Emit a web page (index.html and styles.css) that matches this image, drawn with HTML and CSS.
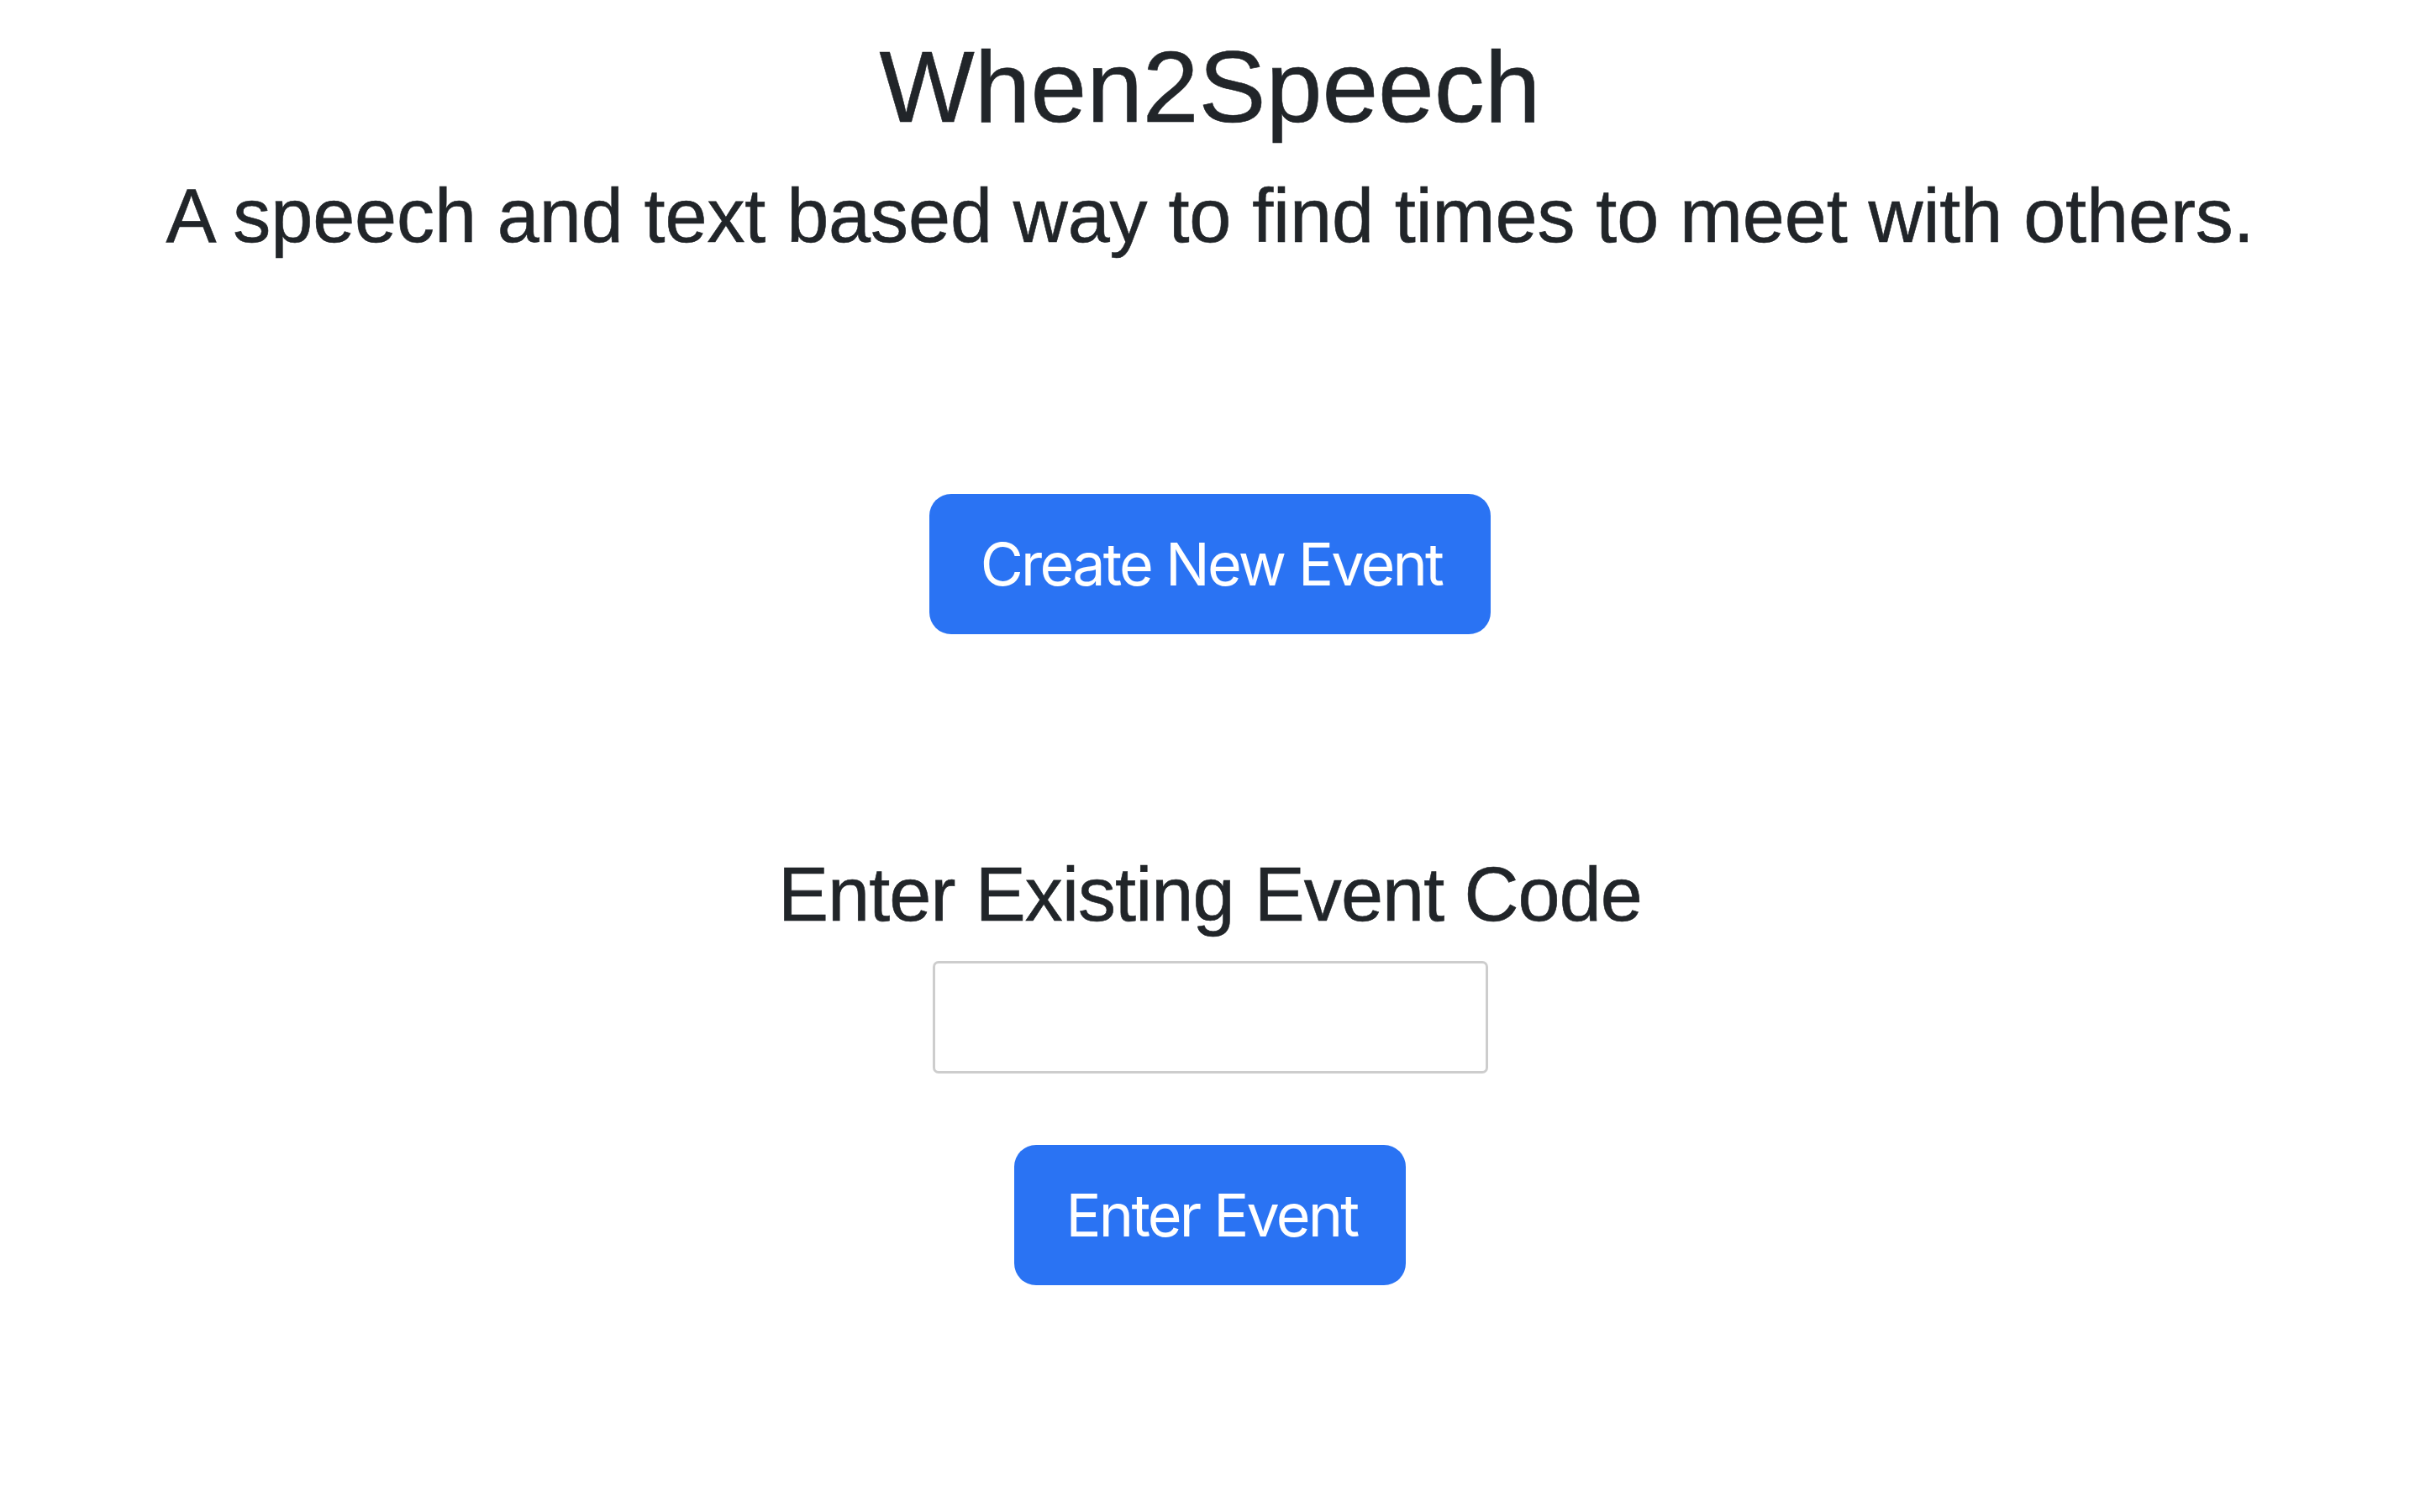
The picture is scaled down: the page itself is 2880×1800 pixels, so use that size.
FILE: index.html
```html
<!DOCTYPE html>
<html lang="en">

<head>
    <meta charset="UTF-8">
    <meta name="viewport" content="width=device-width, initial-scale=1.0">
    <title>When2Speech</title>
    <link rel="stylesheet" href="styles.css">
</head>

<body>

    <main class="home">
        <header class="home-header">
            <h1 class="home-title">When2Speech</h1>
            <h2 class="home-subtitle">A speech and text based way to find times to meet with others.</h2>
        </header>

        <section class="create-section">
            <button class="btn-primary btn-create" type="button">Create New Event</button>
        </section>

        <section class="join-section">
            <label class="join-label" for="event-code">Enter Existing Event Code</label>
            <input class="join-input" id="event-code" type="text">
            <button class="btn-primary btn-enter" type="button">Enter Event</button>
        </section>
    </main>

</body>

</html>
```

FILE: styles.css
```css
* {
    margin: 0;
    padding: 0;
    box-sizing: border-box;
}

body {
    min-height: 100vh;
    background: #fff;
    color: #212529;
    font-family: "Liberation Sans", Arial, sans-serif;
}

/* HOME */
.home {
    display: flex;
    flex-direction: column;
    align-items: center;
    padding-top: 31px;
}

.home-header {
    display: flex;
    flex-direction: column;
    align-items: center;
    gap: 28px;
    text-align: center;
}

.home-title,
.home-subtitle,
.join-label {
    font-weight: 400;
    line-height: 1.2;
    -webkit-text-stroke: 0.6px currentColor;
}

.home-title {
    font-size: 120px;
}

.home-subtitle {
    font-size: 90px;
    letter-spacing: -0.1px;
}

.create-section {
    margin-top: 277px;
}

.join-section {
    display: flex;
    flex-direction: column;
    align-items: center;
    margin-top: 256px;
}

.join-label {
    font-size: 90px;
    letter-spacing: -0.9px;
}

.join-input {
    width: 661px;
    height: 134px;
    margin-top: 25px;
    border: 3px solid #cdcdcd;
    border-radius: 7px;
    background: #fff;
    outline: none;
}

/* BUTTONS */
.btn-primary {
    display: block;
    padding: 42px 58px 41px 61px;
    border: none;
    border-radius: 26px;
    background: #2a73f3;
    color: #fff;
    font-family: Inter, "Noto Sans", sans-serif;
    font-size: 70px;
    line-height: 84px;
    letter-spacing: -2.8px;
    cursor: pointer;
}

.btn-enter {
    margin-top: 85px;
    padding-left: 62px;
    padding-right: 58px;
}

/* HOME */
```
